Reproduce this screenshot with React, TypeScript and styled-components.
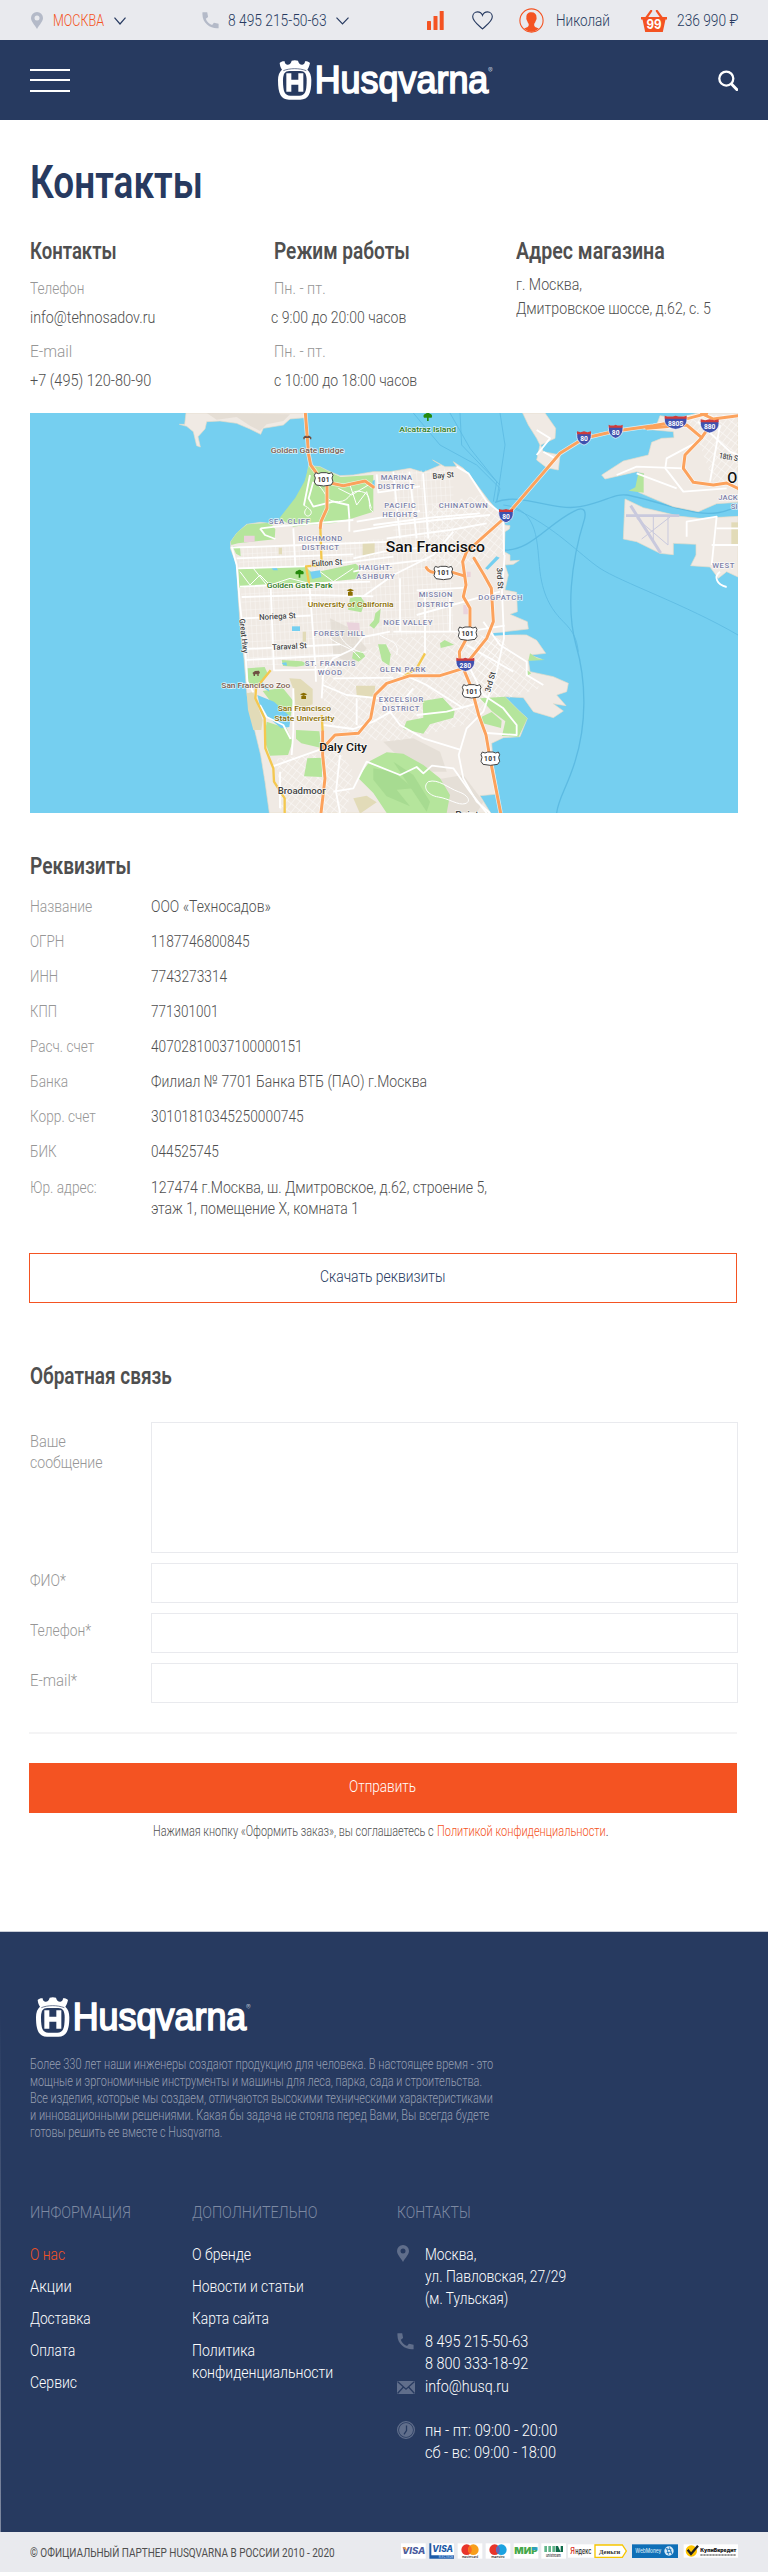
import React, { useLayoutEffect, useRef, useState } from 'react';
import styled, { createGlobalStyle } from 'styled-components';

const navy = '#273a60';
const orange = '#f45322';
const grey = '#4f4f4f';
const pale = '#e9eaee';

const GlobalStyle = createGlobalStyle`
  * { box-sizing: border-box; }
  body { margin: 0; background: #fff; font-family: Roboto, "Liberation Sans", sans-serif; color: ${grey}; }
  a { color: inherit; text-decoration: none; }
`;

/* ---------- condensed text: squeezes a line to the given width ---------- */

const FitBox = styled.span<{ $w: number }>`
  display: inline-block;
  width: ${(p) => p.$w}px;
  white-space: nowrap;
  text-align: left;
`;
const FitInner = styled.span`
  display: inline-block;
  transform-origin: 0 50%;
`;

function Fit({ w, children }: { w: number; children: React.ReactNode }) {
  const ref = useRef<HTMLSpanElement>(null);
  const [scale, setScale] = useState(1);
  useLayoutEffect(() => {
    const el = ref.current;
    if (el && el.offsetWidth) setScale(w / el.offsetWidth);
  }, [w]);
  return (
    <FitBox $w={w}>
      <FitInner ref={ref} style={{ transform: `scaleX(${scale})` }}>{children}</FitInner>
    </FitBox>
  );
}

/* ---------- icons ---------- */

const PinIcon = ({ color, hole }: { color: string; hole: string }) => (
  <svg width="12" height="17" viewBox="0 0 12 17">
    <path d="M6 0a6 6 0 0 1 6 6c0 3.6-3.4 6.400-6 11C3.400 12.400 0 9.600 0 6a6 6 0 0 1 6-6Z" fill={color} />
    <circle cx="6" cy="6" r="2.500" fill={hole} />
  </svg>
);
const PhoneIcon = ({ color }: { color: string }) => (
  <svg width="17" height="17" viewBox="0 0 17 17">
    <path d="M.5.3h4.700l.9 4.800-2.300 1.700c.9 2.900 3.200 5.200 6.300 6.200l1.800-2.300 4.700 1v4.500C9 17.200-.6 11.500.5.300Z" fill={color} />
  </svg>
);
const Chevron = ({ w = 12 }: { w?: number }) => (
  <svg width={w} height="8" viewBox={`0 0 ${w} 8`}>
    <path d={`M.5.7 L${w / 2} 7 L${w - 0.5} .7`} fill="none" stroke={navy} strokeWidth="1.200" />
  </svg>
);
const BarsIcon = () => (
  <svg width="17" height="19" viewBox="0 0 17 19" fill={orange}>
    <rect x="0" y="10" width="4" height="9" rx=".6" />
    <rect x="6.500" y="5" width="4" height="14" rx=".6" />
    <rect x="12.700" y="0" width="4" height="19" rx=".6" />
  </svg>
);
const HeartIcon = () => (
  <svg width="21" height="19" viewBox="0 0 21 19">
    <path d="M10.500 17.900C7 14.500.7 10.500.7 5.800.7 3 2.800.9 5.500.9c2.300 0 4.200 1.400 5 3.500.8-2.100 2.700-3.500 5-3.500 2.700 0 4.800 2.100 4.800 4.900 0 4.700-6.300 8.700-9.800 12.100Z" fill="none" stroke={navy} strokeWidth="1.100" />
  </svg>
);
const UserIcon = () => (
  <svg width="25" height="25" viewBox="0 0 25 25">
    <circle cx="12.500" cy="12.500" r="11.600" fill="none" stroke={orange} strokeWidth="1.100" />
    <path d="M12.400 4.200c3.500 0 5.200 2 5.100 5 .5 2.400-.6 3-1.100 4.600-.4 1.200-1 1.600-1.200 2.100-.1 2.800.7 3 4.600 4.400-3.900 4.600-11 4.600-14.700 0 3.800-1.400 4.700-1.600 4.600-4.400-.3-.5-.9-.9-1.200-2.100-.5-1.600-1.600-2.200-1.100-4.600-.1-3 1.500-5 5-5Z" fill={orange} />
  </svg>
);
const BasketIcon = () => (
  <svg width="26" height="22" viewBox="0 0 26 22">
    <path d="M0 7h26v2.600h-1.500L21.800 22H4.200L1.500 9.600H0Z" fill={orange} />
    <path d="M5.500 7.500 10.200.9M20.500 7.500 15.800.9" stroke={orange} strokeWidth="2.200" strokeLinecap="round" />
    <text x="13" y="19.300" textAnchor="middle" fontFamily="Inter, sans-serif" fontWeight="700" fontSize="13" textLength="15" lengthAdjust="spacingAndGlyphs" fill="#fff">99</text>
  </svg>
);
const SearchIcon = () => (
  <svg width="20" height="21" viewBox="0 0 20 21" fill="none" stroke="#fff">
    <circle cx="8.300" cy="8.600" r="7" strokeWidth="2.300" />
    <path d="m13.500 14 5.300 5.600" strokeWidth="2.900" strokeLinecap="round" />
  </svg>
);
const MailIcon = ({ color }: { color: string }) => (
  <svg width="18" height="13" viewBox="0 0 18 13">
    <rect width="18" height="13" fill={color} />
    <path d="M.5.500 9 8.200 17.500.5M.5 12.500l5.700-6.300M17.500 12.500l-5.700-6.300" fill="none" stroke={navy} strokeWidth="1.300" />
  </svg>
);
const ClockIcon = ({ color }: { color: string }) => (
  <svg width="18" height="18" viewBox="0 0 18 18">
    <circle cx="9" cy="9" r="8.400" fill="none" stroke={color} strokeWidth="1.200" />
    <circle cx="9" cy="9" r="7" fill={color} />
    <path d="M9.500 4.500v5L7 13.300" fill="none" stroke={navy} strokeWidth="1.300" />
  </svg>
);

const LogoSvg = styled.svg`
  display: block;
  overflow: visible;
`;
const Logo = () => (
  <LogoSvg width="216" height="40" viewBox="22 28 648 120">
    <path fill="#fff" d="M27 37c4-4 10-6 15-5 0 5 3 11 9 10 6 0 10-4 12-12 6-2 13-2 19 0 2 8 6 12 12 12 6 1 9-5 9-10 5-1 11 1 15 5-2 8-4 15-8 20 8 7 12 17 12 32 0 40-9 58-33 58H55c-24 0-33-18-33-58 0-15 4-25 12-32-4-5-6-12-7-20Z" />
    <path fill={navy} d="M56 61h33c13 0 19 9 19 28 0 35-5 46-22 46H59c-17 0-22-11-22-46 0-19 6-28 19-28Z" />
    <path fill="#fff" d="M47 68h15v19h21V68h15v55H83v-21H62v21H47Z" />
    <path d="M38 60c20-8 48-8 69 0" fill="none" stroke={navy} strokeWidth="2" />
    <text x="132" y="128" fontFamily="Liberation Sans, sans-serif" fontSize="115" textLength="521" lengthAdjust="spacingAndGlyphs" fill="#fff" stroke="#fff" strokeWidth="5">Husqvarna</text>
    <text x="652" y="66" fontFamily="Inter, sans-serif" fontSize="21" fill="#b9c0cf">®</text>
  </LogoSvg>
);

/* ---------- header ---------- */

const TopBar = styled.div`
  height: 40px;
  background: ${pale};
  display: flex;
  align-items: center;
  padding: 1px 30px 0 31px;
  color: ${navy};
  font-size: 16px;
  font-weight: 350;
  svg { display: block; flex: none; }
`;
const TopItem = styled.div<{ $gap: number; $ml?: number; $accent?: boolean }>`
  display: flex;
  align-items: center;
  gap: ${(p) => p.$gap}px;
  margin-left: ${(p) => p.$ml ?? 0}px;
  color: ${(p) => (p.$accent ? orange : navy)};
`;
const NavBar = styled.header`
  height: 80px;
  background: ${navy};
  display: grid;
  grid-template-columns: 247.500px 1fr 20px;
  align-items: center;
  padding: 0 30px;
  svg { display: block; }
`;
const Burger = styled.button`
  width: 40px;
  height: 23px;
  padding: 0;
  border: 0;
  background: none;
  display: flex;
  flex-direction: column;
  justify-content: space-between;
  i { height: 2px; background: #fff; }
`;

/* ---------- content ---------- */

const Main = styled.main`
  padding: 34px 30px 92px;
`;
const Title = styled.h1`
  margin: 0;
  font-size: 47px;
  line-height: 56px;
  font-weight: 600;
  color: ${navy};
`;
const Heading = styled.h2<{ $mt?: number }>`
  margin: ${(p) => p.$mt ?? 0}px 0 0;
  padding-top: 1px;
  height: 28px;
  font-size: 23px;
  line-height: 28px;
  font-weight: 600;
`;
const ContactGrid = styled.section`
  display: grid;
  grid-template-columns: 244px 242px 1fr;
  margin-top: 27px;
`;
const Caption = styled.div`
  margin-top: 12px;
  font-size: 17px;
  line-height: 22px;
  font-weight: 300;
  color: #969696;
`;
const Value = styled.div<{ $shift?: number }>`
  margin: 7px 0 0 ${(p) => p.$shift ?? 0}px;
  font-size: 17px;
  line-height: 22px;
  font-weight: 350;
`;
const Address = styled.address`
  margin-top: 7px;
  font-size: 17px;
  line-height: 24px;
  font-weight: 350;
  font-style: normal;
  display: flex;
  flex-direction: column;
`;
const MapFrame = styled.div`
  margin-top: 22px;
  height: 400px;
  svg { display: block; }
`;
const Requisites = styled.dl`
  display: grid;
  grid-template-columns: 121px 1fr;
  grid-auto-rows: minmax(35px, auto);
  margin: 16px 0 0;
  font-size: 17px;
  line-height: 21px;
  dt { color: #969696; font-weight: 300; }
  dd { margin: 0; display: flex; flex-direction: column; font-weight: 350; }
  dt:last-of-type, dd:last-of-type { padding-top: 1px; }
`;
const Button = styled.button<{ $solid?: boolean; $mt: number }>`
  display: block;
  width: 708px;
  height: 50px;
  margin: ${(p) => p.$mt}px 0 0 -1px;
  padding: 0 2px 5px 0;
  border: 1px solid ${orange};
  background: ${(p) => (p.$solid ? orange : '#fff')};
  color: ${(p) => (p.$solid ? '#fff' : navy)};
  font: 350 17px Roboto, sans-serif;
  text-align: center;
`;
const Form = styled.form`
  margin-top: 32px;
`;
const Field = styled.label<{ $top: number }>`
  display: grid;
  grid-template-columns: 121px 1fr;
  margin-bottom: 10px;
  font-size: 17px;
  line-height: 21px;
  font-weight: 300;
  color: #969696;
  > span { padding-top: ${(p) => p.$top}px; display: flex; flex-direction: column; }
`;
const Input = styled.input`
  width: 100%;
  height: 40px;
  border: 1px solid ${pale};
  background: #fff;
`;
const Area = styled.textarea`
  display: block;
  width: 100%;
  height: 131px;
  border: 1px solid ${pale};
  resize: none;
`;
const Rule = styled.hr`
  width: 708px;
  height: 2px;
  margin: 29px 0 0 -1px;
  border: 0;
  background: #f4f4f5;
`;
const Note = styled.p`
  display: flex;
  gap: 3px;
  margin: 9px 0 0 123px;
  font-size: 14px;
  line-height: 18px;
  font-weight: 350;
  a { color: ${orange}; margin-right: -3px; }
`;

/* ---------- footer ---------- */

const Footer = styled.footer`
  height: 600px;
  padding: 65px 30px 0;
  color: #fff;
  font-size: 17px;
  line-height: 22px;
  font-weight: 350;
  background: linear-gradient(transparent 80px, #5a6885 400px, #808aa1) 0 0 / 1px 100% no-repeat, ${navy};
  box-shadow: 0 -1px 0 #c9cdd7;
  svg { display: block; }
`;
const FooterLogo = styled.div`
  margin-left: 6px;
`;
const About = styled.p`
  margin: 19px 0 0;
  display: flex;
  flex-direction: column;
  font-size: 14px;
  line-height: 17px;
  color: #979fb1;
`;
const FooterGrid = styled.div`
  display: grid;
  grid-template-columns: 162px 205px 1fr;
  margin-top: 60px;
`;
const FooterTitle = styled.h3`
  margin: 0 0 20px;
  font-size: 17px;
  line-height: 22px;
  font-weight: 350;
  color: #7d89a2;
`;
const FooterLink = styled.a<{ $active?: boolean }>`
  display: flex;
  flex-direction: column;
  margin-bottom: 10px;
  font-weight: 350;
  color: ${(p) => (p.$active ? orange : '#fff')};
`;
const InfoRow = styled.div<{ $mb?: number; $icon: number }>`
  display: grid;
  grid-template-columns: 28px 1fr;
  margin-bottom: ${(p) => p.$mb ?? 0}px;
  font-weight: 350;
  color: #fff;
  > svg { margin-top: ${(p) => p.$icon}px; }
  > div { display: flex; flex-direction: column; }
`;
const BottomBar = styled.div`
  height: 40px;
  padding: 0 30px;
  background: ${pale};
  display: flex;
  align-items: center;
  justify-content: space-between;
  font-size: 13px;
  svg { display: block; margin-top: -2px; }
`;

/* ---------- map ---------- */

type Label = [string, number, number, number, string, number?, number?];

const district = '#7a80a8';
const labels: Label[] = [
  ['Golden Gate Bridge', 752, 143, 220, '#7d5c4d'],
  ['Alcatraz Island', 1138, 80, 170, '#2f7a1a'],
  ['SEA CLIFF', 746, 356, 124, district],
  ['RICHMOND', 835, 407, 132, district],
  ['DISTRICT', 845, 435, 112, district],
  ['Fulton St', 875, 484, 92, '#444', -3],
  ['Golden Gate Park', 740, 550, 197, '#2f7a1a'],
  ['University of California', 863, 606, 258, '#8a6d00'],
  ['HAIGHT-', 1016, 494, 100, district],
  ['ASHBURY', 1009, 522, 115, district],
  ['Noriega St', 718, 645, 110, '#444', -3],
  ['Taraval St', 757, 735, 104, '#444', -3],
  ['Great Hwy', 658, 642, 104, '#444', 84],
  ['FOREST HILL', 881, 693, 154, district],
  ['ST. FRANCIS', 854, 784, 152, district],
  ['WOOD', 893, 811, 73, district],
  ['San Francisco Zoo', 604, 849, 207, '#7d5c4d'],
  ['San Francisco', 773, 918, 160, '#8a6d00'],
  ['State University', 763, 949, 180, '#8a6d00'],
  ['Broadmoor', 773, 1166, 144, '#444', 0, 28],
  ['Daly City', 898, 1039, 143, '#111', 0, 35],
  ['San Francisco', 1097, 440, 298, '#111', 0, 46],
  ['MARINA', 1082, 225, 94, district],
  ['DISTRICT', 1073, 252, 110, district],
  ['PACIFIC', 1093, 309, 94, district],
  ['HEIGHTS', 1087, 336, 105, district],
  ['CHINATOWN', 1256, 310, 147, district],
  ['Bay St', 1238, 222, 64, '#444', -5],
  ['3rd St', 1430, 488, 64, '#444', 87],
  ['3rd St', 1410, 863, 62, '#444', -74],
  ['MISSION', 1196, 577, 101, district],
  ['DISTRICT', 1191, 605, 110, district],
  ['DOGPATCH', 1375, 584, 132, district],
  ['NOE VALLEY', 1090, 660, 147, district],
  ['GLEN PARK', 1079, 801, 138, district],
  ['EXCELSIOR', 1076, 890, 134, district],
  ['DISTRICT', 1086, 917, 112, district],
  ['18th S', 2096, 159, 57, '#444', 10],
  ['JACK', 2095, 284, 58, district],
  ['SI', 2132, 312, 20, district],
  ['WEST', 2077, 489, 66, district],
  ['O', 2122, 234, 30, '#111', 0, 44],
  ['Point', 1306, 1240, 70, '#444', 0, 28],
];
const usShields = [[911, 222], [1270, 503], [1343, 685], [1355, 858], [1411, 1060]];
const interstates: [string, number, number, number][] = [
  ['80', 1458, 331, 42], ['80', 1692, 98, 42], ['80', 1787, 78, 42],
  ['880S', 1967, 51, 66], ['880', 2069, 62, 54], ['280', 1336, 777, 54],
];

const parks = [
  'M866 182l35 4 29 16 32 14 98-6v110l-62 20-55 14-80 5-43 6-42-25 48-62 28-50Z',
  'M632 410l20-28 30-24 70-5 14 20-2 30-110 12-20 5Z',
  'M655 492l200-8 22 20 130-28 14 12-12 34-130 12-160 6-62 8Z',
  'M638 424l22 2 2 28-14-8Z', 'M682 790l52-4 10 22-30 34-28 2Z',
  'M728 858l60-10 32 40-8 46-30-4Z', 'M740 950l60 20 18 40-14 40-54 2-18-50Z',
  'M828 975l70 4 6 50-60-14-16-14Z', 'M862 1060l44-2v58l-54-2Z',
  'M990 580l30-8 14 20-10 30-40-8Z', 'M1000 742l24-4 12 16-20 16-20-10Z',
  'M1066 625l16-14-4 40-16 20-14-10 14-16Z', 'M1074 718l24 0 14 30-4 34-22-14Z',
  'M1208 888l60-10 36 40-4 20-70 20-20 28-60-14 10-24 50-10Z',
  'M1385 935l30-14 30 26-2 22-60-16Z', 'M785 765l60 4 24 10-40 6-40-2Z',
  'M1260 715l14-10 28 14-40 10Z', 'M1530 745l20 14 25 6-50 2Z',
  'M1380 880l75-5 45 45 22 20-26 55-50-2 10-44-40-30Z',
  'M1855 205l16 0 0 58-45-6 20-10Z', 'M1520 795l14 10-10 6Z',
  'M1014 1118l36-50 50-26 50 4 60 34 50 40 30 50-10 54h-180l-40-60Z',
];
const sands = [
  'M680 865l20-4 14 44 14 40-4 30-24 0-16-60Z', 'M808 820l34 2 36 30 0 46-50 20-6-60Z',
  'M1008 842l58 0-4 38-52-8Z', 'M1028 414l36 0 0 36-36 4Z', 'M776 428l10 0 0 20-10 0Z',
  'M848 680l10 0 0 30-10 0Z', 'M1000 1180l40-8 30 20-50 34Z', 'M2134 352l20 0 0 66-20 0Z',
];
const ponds = [
  'M870 500l30-4 4 20-28 6Z', 'M754 488l14-2 6 10-14 0Z', 'M816 664l24 0 0 14-24 0Z',
  'M712 870l50 20 50 46-4 30-24 4-60-50Z', 'M724 830l20 16 4 14-20-14Z', 'M1058 228l6-4 0 20-8-2Z',
  'M1395 490l34-36 10 4-36 36Z', 'M785 774l14-2 2 10-10-2Z',
];
const mainRoads = [
  'M632 428L850 420 1120 410', 'M650 460L1000 448', 'M655 490L850 484 1000 470 1120 455',
  'M660 545L870 535 1050 530', 'M665 576L870 570 1060 574', 'M668 640L872 632', 'M672 732L760 728 960 718',
  'M676 765L960 750', 'M760 796L910 794', 'M636 430L650 480 660 600 676 740 682 830 700 862',
  'M752 548L762 796', 'M868 540L876 640 886 780 888 830', 'M820 370L826 484', 'M988 340L988 380',
  'M905 880L910 800 940 760 1000 732 1030 696 1110 680', 'M908 840L980 870 1080 880 1140 960 1210 1000 1320 1034',
  'M780 1100L780 1210M758 1084L900 1034', 'M820 850V980L815 1050M720 900L740 936 790 960 812 1002',
  'M910 960L1000 972 1060 950 1130 910 1180 850', 'M960 1050L948 1160 960 1224M940 1160L1000 1150 1040 1070 1140 1110 1190 1086 1210 1105 1236 1082 1300 1090 1350 1160 1400 1224',
  'M1000 380L1120 360 1250 345 1410 330', 'M1010 350L1200 318', 'M1000 460L1090 440 1180 430 1290 425', 'M1000 500L1100 478 1220 464',
  'M1070 208L1075 262 1200 244', 'M1120 200L1140 400M1209 205L1225 400M1168 200L1190 400',
  'M1310 185L1345 205 1400 290 1450 330 1452 450', 'M1100 400L1290 375 1400 355', 'M1060 360L1230 338 1380 325',
  'M1030 574L1120 510 1240 450 1300 380', 'M1120 680L1340 680 1454 662', 'M1454 450L1446 560 1452 700 1430 800 1390 920 1340 970 1316 1050 1330 1120 1370 1190 1410 1224',
  'M1190 556L1340 548M1190 630L1440 560', 'M1215 560V750M1140 520V680M1290 560V680', 'M1390 650L1440 720 1520 770 1520 810 1570 840',
  'M1340 720L1480 800M1345 780L1390 870 1450 910 1490 960 1490 990 1400 984', 'M1110 790L1220 840 1330 910', 'M1190 930L1280 920 1370 896',
  'M870 210L852 300M880 230L866 280 880 305 940 290 985 300 988 340', 'M720 370L735 390 766 402M722 370L766 365 1000 345', 'M940 820L1120 818M1010 880V960',
  'M1550 75L1590 100 1550 150M1604 160L1570 140',
  'M2034 50L2130 140 2154 150M2100 60L2070 230M2034 110L1940 160 1936 190 1990 260 2120 250', 'M1790 210L1850 185 1990 190M1850 205L1970 250',
  'M2000 395V350L2090 335 2075 480M2090 370H2154M2075 420H2154', 'M2100 500c-20 15-10 40 20 46',
];
const highways = [
  'M856 24L866 150 872 180 890 205', 'M935 235L970 242 1035 228 1060 246', 'M921 240V310L903 350 901 368',
  'M903 1224L915 1120 908 1050 908 980', 'M908 1030L945 990 1015 985 1052 940 1065 870 1100 835 1170 812 1260 812 1330 790',
  'M1219 488c8 14 18 14 30 14M1290 500L1330 512', 'M1450 342L1340 440 1328 470 1338 540 1330 575 1350 610 1350 670M1340 700L1318 740 1320 770',
  'M1362 460L1392 510 1414 550 1420 650 1400 700 1344 770', 'M1334 800L1355 850 1376 930 1398 990 1410 1060 1442 1224',
  'M1470 320L1620 145 1692 100 1787 78 1900 62 1967 50 2060 26', 'M1880 70L2000 60 2045 98 1995 150 1990 190 2020 232 2080 240 2120 234 2154 250',
  'M2045 98L2070 62M2045 26L2080 42 2154 32',
];
const yellowRoads = [
  'M901 368L905 480 858 484 868 540', 'M752 796L708 850 706 880 734 940 736 1030 760 1090 762 1130 794 1180 794 1224',
  'M905 930L908 980', 'M1215 745L1190 790 1150 815',
];

const land = {
  peninsula:
    'M748 1224L735 1130 722 1050 705 980 688 910 680 860 672 760 662 680 655 580 650 480 632 432V410L650 385 680 358 720 352 750 355 790 345 815 335 835 300 850 250 862 210 866 182 900 185 930 200 960 212 1000 210 1060 200 1110 200 1170 190 1210 202 1262 180 1238 165 1275 185 1310 185 1300 170 1330 190 1345 205 1375 245 1405 285 1435 320 1455 360 1470 362 1468 372 1455 380 1453 440 1470 450V468L1498 466 1480 478 1455 480 1465 510 1455 555 1490 562 1492 620 1470 628 1522 650 1525 672 1455 680V688L1520 690 1550 706 1577 745 1530 750 1565 763 1525 765 1530 800 1600 815 1645 835 1640 860 1610 870 1638 902 1600 896 1630 918 1600 938 1540 920 1510 878 1455 875 1500 920 1522 940 1500 995 1450 998 1415 1015 1420 1080 1432 1150 1425 1168 1380 1172 1412 1224Z',
  marin:
    'M498 24L494 58 478 58 500 64 520 80 530 122 541 126 534 95 555 72 560 50 600 48 650 55 690 72 722 88 730 70 790 60 810 42 855 38V24Z',
  treasure: 'M1508 24L1525 60 1550 100 1560 120 1550 165 1580 188 1615 195 1620 150 1570 140 1562 120 1605 100 1607 70 1575 24Z',
  oakland:
    'M2154 24H2034L1970 40 1920 32 1910 60 1870 72 1960 80 1962 98 1925 100 1895 112 1885 150 1810 168 1745 210 1755 222 1850 200 1872 206 1856 262 1910 285 1960 305 2035 320 2090 296 2154 292Z',
  alameda: 'M1815 282L1870 308 1980 334 2040 340 2154 334V516L2120 500 2095 520 2070 486 2012 482 2028 450V418L1960 415V449L1920 445 1850 410 1810 402Z',
};

const MapView = () => (
  <svg width="708" height="400" viewBox="30 24 2124 1200" preserveAspectRatio="none">
    <defs>
      <pattern id="grid" width="14" height="24" patternUnits="userSpaceOnUse" patternTransform="rotate(-3)">
        <path d="M0 0H14M0 0V24" stroke="#fff" strokeWidth="3" opacity=".6" />
      </pattern>
      <pattern id="gridTilt" width="16" height="22" patternUnits="userSpaceOnUse" patternTransform="rotate(38)">
        <path d="M0 0H16M0 0V22" stroke="#fff" strokeWidth="3.500" opacity=".65" />
      </pattern>
    </defs>
    <rect x="30" y="24" width="2124" height="1200" fill="#75cff0" />
    <g fill="none" stroke="#5dbbe2" strokeWidth="2.500">
      <path d="M1180 24L1260 120 1370 180 1440 250 1430 290M1290 24L1350 130 1430 230 1420 290M1440 24L1455 120 1430 290M1320 24L1325 120 1440 240" />
      <path d="M1425 292C1500 260 1600 320 1680 305S1780 265 1820 270 1960 310 2030 322 2130 310 2154 305" strokeWidth="4" />
      <path d="M1450 435C1530 440 1580 360 1660 320 1685 305 1700 310 1694 340 1650 480 1640 620 1668 720 1700 830 1700 960 1665 1070 1640 1150 1615 1180 1610 1224" strokeWidth="4" />
      <path d="M1450 300C1560 310 1550 420 1560 500S1600 620 1630 650 1670 700 1675 740M1480 310C1600 360 1680 450 1740 490S2000 600 2154 690" />
    </g>
    <g fill="#f0eae4" stroke="#e6dcc8" strokeWidth="2">
      {Object.entries(land).map(([name, d]) => <path key={name} d={d} />)}
    </g>
    <path d="M560 24l30 20 60-8 40 26 30 16 20-20 50-10 20-20Z" fill="#ddd6cb" opacity=".6" />
    <path d="M655 432L1120 400V200L1300 190 1300 680 1090 700 900 780 676 780Z" fill="url(#grid)" />
    <path d="M900 790L1130 700 1330 680 1440 700 1430 880 1330 960 1130 1010 1000 1000 920 950Z" fill="url(#gridTilt)" />
    <path d="M1230 300L1380 270 1450 340V440L1330 490 1200 470Z" fill="url(#gridTilt)" />
    <path d="M770 1060L960 1040 1000 1100 980 1224H780Z" fill="url(#gridTilt)" />
    <path d="M1350 690L1440 700 1560 850 1400 900Z M2000 30L2154 30V250L2080 230 2040 120Z" fill="url(#gridTilt)" />
    <g fill="#dfd9cf" opacity=".6">
      <path d="M930 640l60 30 50 60-40 50-60-30Z" /><path d="M1090 1010l90-10 80 40 20 60-60 0-80-40Z" /><path d="M1210 1130l120-20 60 80-20 34h-120Z" />
    </g>
    <g fill="#b5e59c">{parks.map((d) => <path key={d} d={d} />)}</g>
    <g fill="#9fd58a" opacity=".6">
      <path d="M1060 1090l60 10 60 50-50 4 40 50-70-30-40-50Z" /><path d="M1120 1070l60 40 50 80-10 30-60-90Z" />
    </g>
    <g fill="#e2dbb8">{sands.map((d) => <path key={d} d={d} />)}</g>
    <path d="M672 392h32v18l-32 2ZM980 652l38 2 2 28-34-8ZM1330 600h14v28h-14ZM1340 500h12v16h-12Z" fill="#ead3dc" />
    <g fill="#75cff0">{ponds.map((d) => <path key={d} d={d} />)}<path d="M1420 684L1530 678V686L1420 692Z" /></g>
    <g fill="none" stroke="#c9c9dd">
      <path d="M1832 302L1922 444" strokeWidth="9" /><path d="M1818 332H1978" strokeWidth="8" />
      <path d="M1865 402L1950 336M1850 340L1944 420V336M1900 334V410" strokeWidth="3" />
    </g>
    <g fill="none" stroke="#fff" strokeWidth="5.500" strokeLinejoin="round">{mainRoads.map((d) => <path key={d} d={d} />)}</g>
    <g fill="none" stroke="#fff" strokeWidth="3">
      <path d="M895 240c30 30 20 50 60 50s30-40 70-30 10 50 34 60M990 240l20 60 30-40 14 50M955 250l40 20 50-30M850 300c20 10 30 20 20 30s-24-6-10-20M660 500l30 40 30-30 30 30 60-20 60 16M700 490l40 50M900 500l40 30 60-40" />
      <path d="M1225 1130c30-10 60 20 90 30s40 30 20 36-50-16-80-20-50-30-30-46M930 700c40 30 60 20 90 60M960 690c10 30 60 60 80 50M1080 690c30 20 60 20 50 60" />
    </g>
    <g fill="none" stroke="#f4c84f" strokeWidth="7" strokeLinejoin="round">{yellowRoads.map((d) => <path key={d} d={d} />)}</g>
    <g fill="none" stroke="#fff" strokeWidth="13" strokeLinejoin="round" opacity=".7">{highways.map((d) => <path key={d} d={d} />)}</g>
    <g fill="none" stroke="#fca25c" strokeWidth="9" strokeLinejoin="round" strokeLinecap="round">{highways.map((d) => <path key={d} d={d} />)}</g>
    <g fill="#248a0c">
      <path d="M828 508c-4-6 0-11 5-11 3-4 9-4 11 0 6 0 9 5 6 11h-9v10h-5v-10Z" />
      <path d="M1212 38c-4-6 0-12 6-12 3-4 9-4 11 0 6 0 9 6 6 12h-9v10h-5V38Z" />
    </g>
    <g fill="#8a6d00">
      <path d="M980 556l11-5 11 5-11 5ZM984 561h14v11h-14Z" /><path d="M840 868l11-5 11 5-11 5ZM844 873h14v9h-14Z" />
    </g>
    <path d="M697 804l8-6 12-1 3 7-4 3v6h-4v-5h-7v5h-4l-1-6Z M850 103v-6l5-5h4l2 3 3-3h4l6 5v6h-4v-4h-16v4Z" fill="#6f4f42" />
    {labels.map(([text, x, y, w, color, angle = 0, size = 24]) => (
      <text
        key={`${text}${x}${y}`}
        x={x}
        y={y}
        fontSize={color === district ? 23 : size}
        fontWeight={500}
        fill={color}
        stroke="#fff"
        strokeOpacity=".75"
        strokeWidth="4"
        paintOrder="stroke"
        textLength={w}
        lengthAdjust={color === district ? 'spacing' : 'spacingAndGlyphs'}
        transform={`rotate(${angle} ${x} ${y})`}
        fontFamily="Roboto, sans-serif"
      >
        {text}
      </text>
    ))}
    {usShields.map(([x, y]) => (
      <g key={`${x}${y}`}>
        <path d={`M${x - 24} ${y - 19}l8 3 8-3h16l8 3 8-3 4 8-3 8 3 12-6 9-22 3-22-3-6-9 3-12-3-8Z`} fill="#fff" stroke="#444" strokeWidth="3" />
        <text x={x} y={y + 8} textAnchor="middle" fontFamily="Roboto, sans-serif" fontSize="20" fontWeight="700" fill="#333" letterSpacing="1">101</text>
      </g>
    ))}
    {interstates.map(([text, x, y, w]) => (
      <g key={`${text}${x}`}>
        <path d={`M${x - w / 2} ${y - 14}h${w}c4 20-8 32-${w / 2} 36-${w / 2 - 8}-4-${w / 2 + 4}-16-${w / 2}-36Z`} fill="#3f51ae" stroke="#fff" strokeWidth="2" />
        <path d={`M${x - w / 2} ${y - 19}q${w / 4} 5 ${w / 2} 0q${w / 4} 5 ${w / 2} 0v9h${-w}Z`} fill="#cf3b3b" />
        <text x={x} y={y + 11} textAnchor="middle" fontFamily="Roboto, sans-serif" fontSize="20" fontWeight="700" fill="#fff">{text}</text>
      </g>
    ))}
  </svg>
);

/* ---------- payment marks ---------- */

const Payments = () => (
  <svg width="337" height="16" viewBox="51 55 1011 48" fontFamily="Inter, sans-serif">
    <g fill="#fff">
      {[51, 136, 221, 305, 389, 472].map((x) => <rect key={x} x={x} y="56" width="74" height="46" />)}
      <rect x="552" y="59" width="80" height="40" /><rect x="899" y="59" width="163" height="40" />
    </g>
    <text x="54" y="89" fontSize="27" fontWeight="800" fontStyle="italic" fill="#4a5ca0" textLength="70" lengthAdjust="spacingAndGlyphs">VISA</text>
    <path d="M55 68l10 0 5 12Z" fill="#f0a040" />
    <path d="M136 56h6v36h68v10h-74Z" fill="#1d5ba8" />
    <text x="145" y="82" fontSize="25" fontWeight="800" fontStyle="italic" fill="#1d5ba8" textLength="62" lengthAdjust="spacingAndGlyphs">VISA</text>
    <text x="164" y="101" fontSize="9" fontWeight="700" fill="#9fc0e8" textLength="44" lengthAdjust="spacingAndGlyphs">ELECTRON</text>
    <circle cx="248" cy="75" r="16" fill="#e8352b" /><circle cx="268" cy="75" r="16" fill="#f79e1b" /><path d="M258 63a16 16 0 0 1 0 24 16 16 0 0 1 0-24" fill="#ff6a22" />
    <text x="234" y="100" fontSize="10" fontWeight="600" fill="#333" textLength="48" lengthAdjust="spacingAndGlyphs">mastercard</text>
    <circle cx="332" cy="75" r="16" fill="#e8352b" /><circle cx="352" cy="75" r="16" fill="#1ba2e0" /><path d="M342 63a16 16 0 0 1 0 24 16 16 0 0 1 0-24" fill="#6c63b5" />
    <text x="322" y="100" fontSize="10" fontWeight="600" fill="#333" textLength="40" lengthAdjust="spacingAndGlyphs">maestro</text>
    <text x="391" y="88" fontSize="25" fontWeight="900" fill="#46a84a" textLength="70" lengthAdjust="spacingAndGlyphs">МИР</text>
    <path d="M444 68h17l-3 9h-14Z" fill="#2c9fc4" />
    <path d="M481 64h8v18h-8ZM493 64h8v18h-8ZM505 64h8v18h-8Z" fill="#62b58a" /><path d="M515 64h7l8 18v-18h7v18h-22Z" fill="#0f6b4a" />
    <text x="486" y="97" fontSize="12" fontWeight="600" fill="#444" textLength="44" lengthAdjust="spacingAndGlyphs">unistream</text>
    <text x="559" y="88" fontSize="25" fontWeight="500" fill="#d62b20" textLength="14" lengthAdjust="spacingAndGlyphs">Я</text>
    <text x="574" y="88" fontSize="22" fontWeight="500" fill="#222" textLength="48" lengthAdjust="spacingAndGlyphs">ндекс</text>
    <path d="M633 61h82l12 18-12 19h-82Z" fill="#fff" stroke="#f7c600" strokeWidth="4" />
    <text x="645" y="87" fontSize="20" fontWeight="700" fill="#333" fontFamily="Liberation Serif, serif" textLength="64" lengthAdjust="spacingAndGlyphs">Деньги</text>
    <rect x="744" y="59" width="138" height="41" fill="#0f6fb7" />
    <text x="754" y="86" fontSize="17" fontWeight="500" fill="#d5e8f6" textLength="78" lengthAdjust="spacingAndGlyphs">WebMoney</text>
    <circle cx="855" cy="79" r="14" fill="#d9eaf7" /><path d="M845 72l18 4M848 84l16-2M856 68l8 22M848 70l6 20" stroke="#0f6fb7" strokeWidth="2.500" />
    <circle cx="922" cy="79" r="17" fill="#fdc300" /><path d="M911 75l10 13 21-25" fill="none" stroke="#222" strokeWidth="7" />
    <text x="949" y="83" fontSize="16" fontWeight="900" fill="#222" textLength="108" lengthAdjust="spacingAndGlyphs">КупиВкредит</text>
    <path d="M949 91H1056" stroke="#777" strokeWidth="4" strokeDasharray="7 2" />
  </svg>
);

/* ---------- data ---------- */

const requisites: [string, number, [string, number][]][] = [
  ['Название', 62, [['ООО «Техносадов»', 119.5]]],
  ['ОГРН', 34, [['1187746800845', 99]]],
  ['ИНН', 28, [['7743273314', 76]]],
  ['КПП', 27, [['771301001', 67.5]]],
  ['Расч. счет', 64, [['40702810037100000151', 152]]],
  ['Банка', 38, [['Филиал № 7701 Банка ВТБ (ПАО) г.Москва', 276]]],
  ['Корр. счет', 66, [['30101810345250000745', 153]]],
  ['БИК', 27, [['044525745', 68]]],
  ['Юр. адрес:', 67, [['127474 г.Москва, ш. Дмитровское, д.62, строение 5,', 336], ['этаж 1, помещение X, комната 1', 208]]],
];
const about: [string, number][] = [
  ['Более 330 лет наши инженеры создают продукцию для человека. В настоящее время - это', 463],
  ['мощные и эргономичные инструменты и машины для леса, парка, сада и строительства.', 452],
  ['Все изделия, которые мы создаем, отличаются высокими техническими характеристиками', 463],
  ['и инновационными решениями. Какая бы задача не стояла перед Вами, Вы всегда будете', 459.5],
  ['готовы решить ее вместе с Husqvarna.', 192.5],
];
const infoLinks: [string, number][] = [['О нас', 35], ['Акции', 41.5], ['Доставка', 60.5], ['Оплата', 45.5], ['Сервис', 47]];
const moreLinks: [string, number][][] = [
  [['О бренде', 59]], [['Новости и статьи', 111.5]], [['Карта сайта', 76.5]],
  [['Политика', 63], ['конфиденциальности', 141]],
];
const dim = '#606e8b';

export default function App() {
  return (
    <>
      <GlobalStyle />
      <TopBar>
        <TopItem $gap={10} $accent>
          <PinIcon color="#b4bac8" hole={pale} />
          <Fit w={51}>МОСКВА</Fit>
          <Chevron />
        </TopItem>
        <TopItem $gap={9} $ml={76}>
          <PhoneIcon color="#b4bac8" />
          <Fit w={99}>8 495 215-50-63</Fit>
          <Chevron w={13} />
        </TopItem>
        <TopItem $gap={28} $ml={78}>
          <BarsIcon />
          <HeartIcon />
        </TopItem>
        <TopItem $gap={12} $ml={26}>
          <UserIcon />
          <Fit w={54}>Николай</Fit>
        </TopItem>
        <TopItem $gap={10} $ml={31}>
          <BasketIcon />
          <Fit w={61}>236 990 ₽</Fit>
        </TopItem>
      </TopBar>
      <NavBar>
        <Burger aria-label="Меню"><i /><i /><i /></Burger>
        <Logo />
        <SearchIcon />
      </NavBar>

      <Main>
        <Title><Fit w={173}>Контакты</Fit></Title>
        <ContactGrid>
          <div>
            <Heading><Fit w={87}>Контакты</Fit></Heading>
            <Caption><Fit w={54.5}>Телефон</Fit></Caption>
            <Value><Fit w={125}>info@tehnosadov.ru</Fit></Value>
            <Caption><Fit w={42}>E-mail</Fit></Caption>
            <Value><Fit w={121}>+7 (495) 120-80-90</Fit></Value>
          </div>
          <div>
            <Heading><Fit w={136}>Режим работы</Fit></Heading>
            <Caption><Fit w={52}>Пн. - пт.</Fit></Caption>
            <Value $shift={-3}><Fit w={135.5}>с 9:00 до 20:00 часов</Fit></Value>
            <Caption><Fit w={52}>Пн. - пт.</Fit></Caption>
            <Value><Fit w={143}>с 10:00 до 18:00 часов</Fit></Value>
          </div>
          <div>
            <Heading><Fit w={149}>Адрес магазина</Fit></Heading>
            <Address>
              <Fit w={66}>г. Москва,</Fit>
              <Fit w={195}>Дмитровское шоссе, д.62, с. 5</Fit>
            </Address>
          </div>
        </ContactGrid>

        <MapFrame><MapView /></MapFrame>

        <Heading $mt={39}><Fit w={101}>Реквизиты</Fit></Heading>
        <Requisites>
          {requisites.map(([name, w, lines]) => (
            <React.Fragment key={name}>
              <dt><Fit w={w}>{name}</Fit></dt>
              <dd>{lines.map(([line, lw]) => <Fit key={line} w={lw}>{line}</Fit>)}</dd>
            </React.Fragment>
          ))}
        </Requisites>
        <Button $mt={34}><Fit w={125}>Скачать реквизиты</Fit></Button>

        <Heading $mt={59}><Fit w={142}>Обратная связь</Fit></Heading>
        <Form>
          <Field $top={9}>
            <span><Fit w={36}>Ваше</Fit><Fit w={73}>сообщение</Fit></span>
            <Area />
          </Field>
          <Field $top={7}><span><Fit w={35.5}>ФИО*</Fit></span><Input /></Field>
          <Field $top={7}><span><Fit w={61}>Телефон*</Fit></span><Input /></Field>
          <Field $top={7}><span><Fit w={47.5}>E-mail*</Fit></span><Input /></Field>
          <Rule />
          <Button $solid $mt={29} type="button"><Fit w={67}>Отправить</Fit></Button>
          <Note>
            <Fit w={281}>Нажимая кнопку «Оформить заказ», вы соглашаетесь с</Fit>
            <a href="#policy"><Fit w={168.5}>Политикой конфиденциальности</Fit></a>.
          </Note>
        </Form>
      </Main>

      <Footer>
        <FooterLogo><Logo /></FooterLogo>
        <About>{about.map(([line, w]) => <Fit key={line} w={w}>{line}</Fit>)}</About>
        <FooterGrid>
          <nav>
            <FooterTitle><Fit w={101}>ИНФОРМАЦИЯ</Fit></FooterTitle>
            {infoLinks.map(([t, w], i) => <FooterLink key={t} $active={i === 0}><Fit w={w}>{t}</Fit></FooterLink>)}
          </nav>
          <nav>
            <FooterTitle><Fit w={125}>ДОПОЛНИТЕЛЬНО</Fit></FooterTitle>
            {moreLinks.map((lines) => (
              <FooterLink key={lines[0][0]}>{lines.map(([t, w]) => <Fit key={t} w={w}>{t}</Fit>)}</FooterLink>
            ))}
          </nav>
          <div>
            <FooterTitle><Fit w={73.5}>КОНТАКТЫ</Fit></FooterTitle>
            <InfoRow $icon={2} $mb={21}>
              <PinIcon color={dim} hole={navy} />
              <div><Fit w={51.5}>Москва,</Fit><Fit w={141.5}>ул. Павловская, 27/29</Fit><Fit w={83}>(м. Тульская)</Fit></div>
            </InfoRow>
            <InfoRow $icon={3} $mb={1}>
              <PhoneIcon color={dim} />
              <div><Fit w={103.5}>8 495 215-50-63</Fit><Fit w={103.5}>8 800 333-18-92</Fit></div>
            </InfoRow>
            <InfoRow $icon={6} $mb={22}>
              <MailIcon color={dim} />
              <div><Fit w={84}>info@husq.ru</Fit></div>
            </InfoRow>
            <InfoRow $icon={2}>
              <ClockIcon color={dim} />
              <div><Fit w={132}>пн - пт: 09:00 - 20:00</Fit><Fit w={131}>сб - вс: 09:00 - 18:00</Fit></div>
            </InfoRow>
          </div>
        </FooterGrid>
      </Footer>
      <BottomBar>
        <Fit w={305}>© ОФИЦИАЛЬНЫЙ ПАРТНЕР HUSQVARNA В РОССИИ 2010 - 2020</Fit>
        <Payments />
      </BottomBar>
    </>
  );
}
